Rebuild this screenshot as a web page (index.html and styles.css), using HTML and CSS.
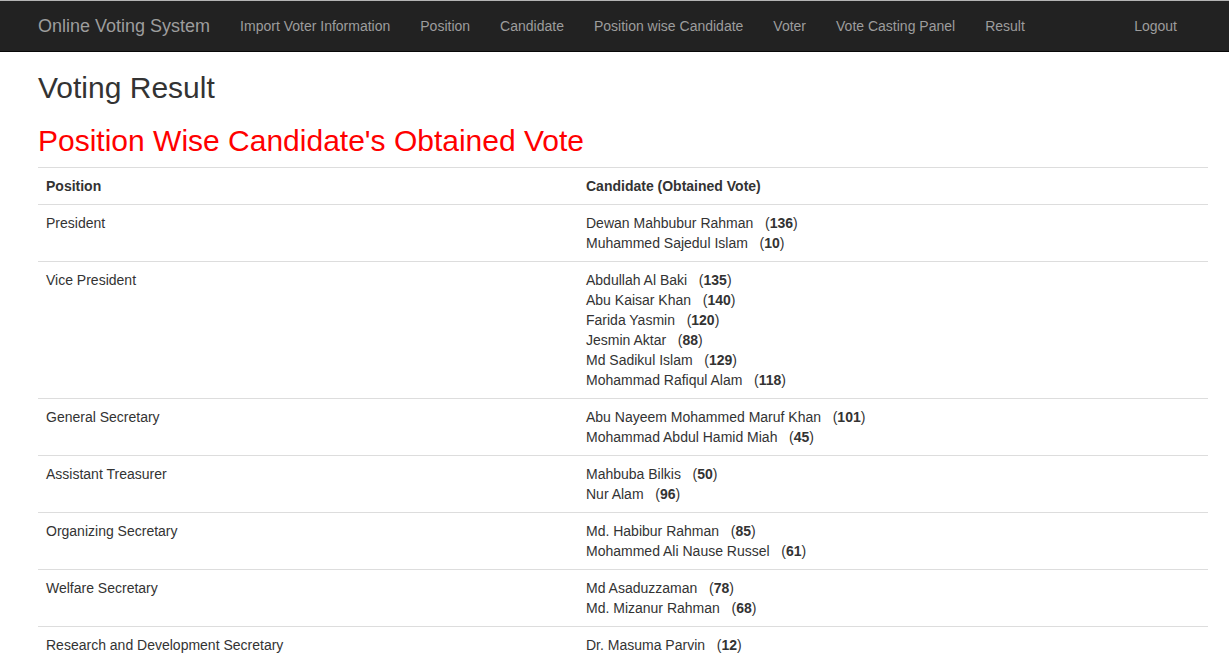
FILE: index.html
```html
<!DOCTYPE html>
<html lang="en">
<head>
<meta charset="utf-8">
<title>Online Voting System - Result</title>
<link rel="stylesheet" href="styles.css">
</head>
<body>
<nav class="navbar">
  <div class="container nav-inner">
    <a class="brand" href="#">Online Voting System</a>
    <ul class="nav">
      <li><a href="#">Import Voter Information</a></li>
      <li><a href="#">Position</a></li>
      <li><a href="#">Candidate</a></li>
      <li><a href="#">Position wise Candidate</a></li>
      <li><a href="#">Voter</a></li>
      <li><a href="#">Vote Casting Panel</a></li>
      <li><a href="#">Result</a></li>
    </ul>
    <ul class="nav nav-right">
      <li><a href="#">Logout</a></li>
    </ul>
  </div>
</nav>
<main class="container">
  <h2 class="page-title">Voting Result</h2>
  <h2 class="section-title">Position Wise Candidate's Obtained Vote</h2>
  <table class="result-table">
    <colgroup><col class="col-position"><col></colgroup>
    <thead>
      <tr><th>Position</th><th>Candidate (Obtained Vote)</th></tr>
    </thead>
    <tbody>
      <tr>
        <td>President</td>
        <td>
          <div>Dewan Mahbubur Rahman &nbsp;&nbsp;(<b>136</b>)</div>
          <div>Muhammed Sajedul Islam &nbsp;&nbsp;(<b>10</b>)</div>
        </td>
      </tr>
      <tr>
        <td>Vice President</td>
        <td>
          <div>Abdullah Al Baki &nbsp;&nbsp;(<b>135</b>)</div>
          <div>Abu Kaisar Khan &nbsp;&nbsp;(<b>140</b>)</div>
          <div>Farida Yasmin &nbsp;&nbsp;(<b>120</b>)</div>
          <div>Jesmin Aktar &nbsp;&nbsp;(<b>88</b>)</div>
          <div>Md Sadikul Islam &nbsp;&nbsp;(<b>129</b>)</div>
          <div>Mohammad Rafiqul Alam &nbsp;&nbsp;(<b>118</b>)</div>
        </td>
      </tr>
      <tr>
        <td>General Secretary</td>
        <td>
          <div>Abu Nayeem Mohammed Maruf Khan &nbsp;&nbsp;(<b>101</b>)</div>
          <div>Mohammad Abdul Hamid Miah &nbsp;&nbsp;(<b>45</b>)</div>
        </td>
      </tr>
      <tr>
        <td>Assistant Treasurer</td>
        <td>
          <div>Mahbuba Bilkis &nbsp;&nbsp;(<b>50</b>)</div>
          <div>Nur Alam &nbsp;&nbsp;(<b>96</b>)</div>
        </td>
      </tr>
      <tr>
        <td>Organizing Secretary</td>
        <td>
          <div>Md. Habibur Rahman &nbsp;&nbsp;(<b>85</b>)</div>
          <div>Mohammed Ali Nause Russel &nbsp;&nbsp;(<b>61</b>)</div>
        </td>
      </tr>
      <tr>
        <td>Welfare Secretary</td>
        <td>
          <div>Md Asaduzzaman &nbsp;&nbsp;(<b>78</b>)</div>
          <div>Md. Mizanur Rahman &nbsp;&nbsp;(<b>68</b>)</div>
        </td>
      </tr>
      <tr>
        <td>Research and Development Secretary</td>
        <td>
          <div>Dr. Masuma Parvin &nbsp;&nbsp;(<b>12</b>)</div>
        </td>
      </tr>
    </tbody>
  </table>
</main>
</body>
</html>
```

FILE: styles.css
```css
* {
  box-sizing: border-box;
}

html, body {
  margin: 0;
  padding: 0;
}

html {
  overflow: hidden;
}

body {
  font-family: "Liberation Sans", Arial, Helvetica, sans-serif;
  font-size: 14px;
  line-height: 1.42857143;
  color: #333;
  background: #fff;
}

a {
  text-decoration: none;
}

.container {
  margin: 0 21px 0 38px;
}

.navbar {
  background: #222;
  border-top: 1px solid #b4b4b4;
  border-bottom: 1px solid #080808;
}

.nav-inner {
  display: flex;
  align-items: stretch;
  height: 50px;
}

.brand {
  display: block;
  margin-left: -15px;
  padding: 15px;
  font-size: 18px;
  line-height: 20px;
  height: 50px;
  color: #9d9d9d;
}

.nav {
  display: flex;
  list-style: none;
  margin: 0;
  padding: 0;
}

.nav a {
  display: block;
  padding: 15px;
  line-height: 20px;
  color: #9d9d9d;
}

.nav-right {
  margin-left: auto;
  margin-right: 16px;
}

h2 {
  font-family: inherit;
  font-size: 30px;
  font-weight: 500;
  line-height: 1.1;
  margin: 20px 0 10px;
}

.page-title {
  color: #333;
  margin-top: 19px;
}

.section-title {
  color: #ff0000;
}

.result-table {
  width: 100%;
  border-collapse: collapse;
  border-spacing: 0;
  margin-top: 3px;
}

.col-position {
  width: 540px;
}

.result-table th,
.result-table td {
  padding: 8px;
  line-height: 20px;
  text-align: left;
  vertical-align: top;
  border-top: 1px solid #ddd;
}

.result-table th {
  font-weight: bold;
  font-size: 14px;
  border-bottom: 1px solid #ddd;
}

.result-table b {
  font-weight: bold;
}
```
